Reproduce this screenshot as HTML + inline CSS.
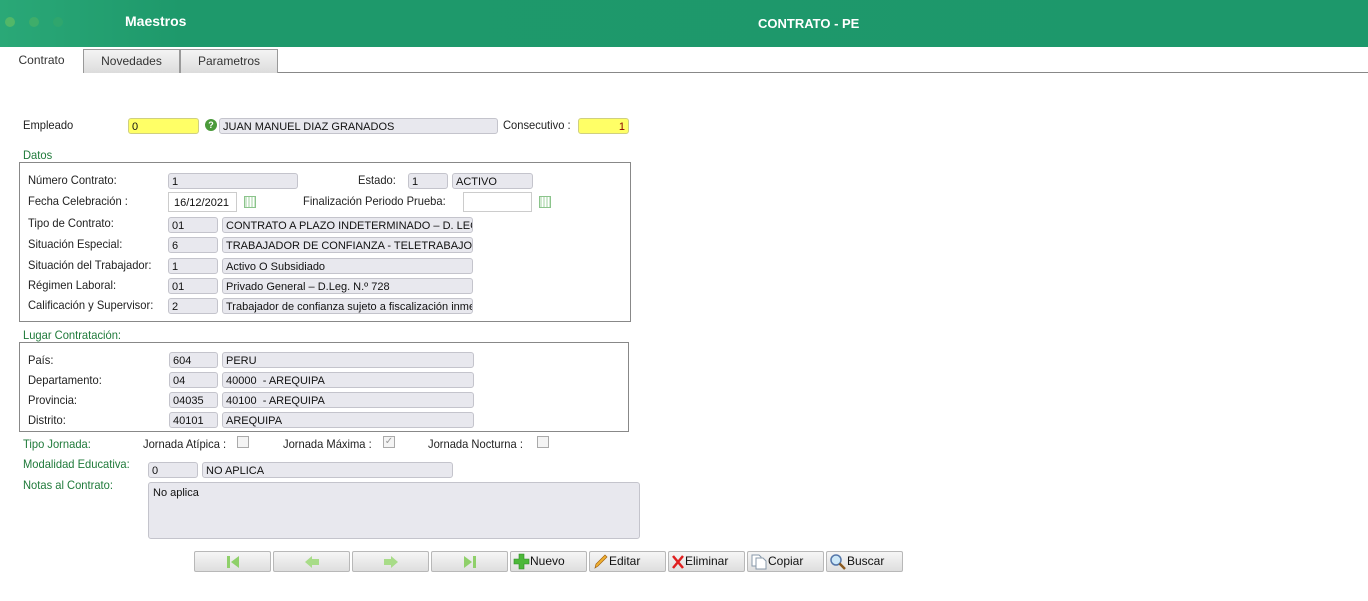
<!DOCTYPE html>
<html><head><meta charset="utf-8"><style>
*{margin:0;padding:0;box-sizing:border-box}
body{width:1368px;height:601px;background:#fff;position:relative;overflow:hidden;font-family:"Liberation Sans",Arial,sans-serif;color:#222}
.a{position:absolute}
.hdr{left:0;top:0;width:1368px;height:47px;background:linear-gradient(90deg,#2aa877 0,#1e996b 180px,#1d986b 100%)}
.dot{width:10px;height:10px;border-radius:50%;background:#52b768;top:17px}
.l{position:absolute;font-size:12px;line-height:14px;color:#222;white-space:nowrap;transform:scaleX(.93);transform-origin:0 0}
.g{color:#1f7a3a}
.f{position:absolute;height:16px;border:1px solid #c4c4cc;border-radius:3px;background:#e8e8ee;font-size:11px;line-height:16px;padding-left:3px;white-space:nowrap;overflow:hidden;color:#111}
.y{background:#ffff66;border-color:#d0d080;color:#800}
.w{background:#fff;border-radius:0;border-color:#ccc}
.box{position:absolute;border:1px solid #888}
.tab{position:absolute;top:49px;height:24px;font-size:12px;line-height:22px;text-align:center;color:#333;background:linear-gradient(#f4f4f4,#dcdcdc);border:1px solid #999;border-bottom:none}
.cal{position:absolute;width:12px;height:12px;border:1px solid #8bc48b;background:repeating-linear-gradient(90deg,#cfe8cf 0 2px,#fff 2px 3px)}
.cb{position:absolute;width:12px;height:12px;border:1px solid #aaa;background:#f4f4f4}
.b{position:absolute;top:551px;width:77px;height:21px;border:1px solid #b8b8b8;border-radius:2px;background:linear-gradient(#f6f6f6,#dedede);font-size:12px;line-height:19px;color:#111;display:flex;align-items:center;justify-content:center}
.b.t{justify-content:flex-start;padding-left:2px}
</style></head><body>
<div class="a hdr"></div>
<div class="a dot" style="left:5px"></div>
<div class="a dot" style="left:29px;background:#3fad6a"></div>
<div class="a dot" style="left:53px;background:#2fa66d"></div>
<div class="a" style="left:125px;top:13px;color:#fff;font-weight:bold;font-size:14px">Maestros</div>
<div class="a" style="left:758px;top:16px;color:#fff;font-weight:bold;font-size:13px">CONTRATO - PE</div>
<div class="a" style="left:0;top:72px;width:1368px;height:1px;background:#888"></div>
<div class="a" style="left:0;top:49px;width:83px;height:24px;background:#fff;font-size:12px;line-height:22px;text-align:center;color:#333">Contrato</div>
<div class="tab" style="left:83px;width:97px">Novedades</div>
<div class="tab" style="left:180px;width:98px">Parametros</div>

<div class="l" style="left:23px;top:118px">Empleado</div>
<div class="f y" style="left:128px;top:118px;width:71px;color:#111">0</div>
<div class="a" style="left:205px;top:119px;width:12px;height:12px;border-radius:50%;background:#4a9a3a;color:#fff;font-size:9px;font-weight:bold;text-align:center;line-height:12px">?</div>
<div class="f" style="left:219px;top:118px;width:279px">JUAN MANUEL DIAZ GRANADOS</div>
<div class="l" style="left:503px;top:118px">Consecutivo :</div>
<div class="f y" style="left:578px;top:118px;width:51px;text-align:right;padding-right:3px">1</div>

<div class="l g" style="left:23px;top:148px">Datos</div>
<div class="box" style="left:19px;top:162px;width:612px;height:160px"></div>
<div class="l" style="left:28px;top:173px">Número Contrato:</div>
<div class="f" style="left:168px;top:173px;width:130px">1</div>
<div class="l" style="left:358px;top:173px">Estado:</div>
<div class="f" style="left:408px;top:173px;width:40px">1</div>
<div class="f" style="left:452px;top:173px;width:81px">ACTIVO</div>
<div class="l" style="left:28px;top:194px">Fecha Celebración :</div>
<div class="f w" style="left:168px;top:192px;width:69px;height:20px;line-height:20px;padding-left:5px">16/12/2021</div>
<div class="cal" style="left:244px;top:196px"></div>
<div class="l" style="left:303px;top:194px">Finalización Periodo Prueba:</div>
<div class="f w" style="left:463px;top:192px;width:69px;height:20px"></div>
<div class="cal" style="left:539px;top:196px"></div>
<div class="l" style="left:28px;top:216px">Tipo de Contrato:</div>
<div class="f" style="left:168px;top:217px;width:50px">01</div>
<div class="f" style="left:222px;top:217px;width:251px">CONTRATO A PLAZO INDETERMINADO – D. LEG</div>
<div class="l" style="left:28px;top:237px">Situación Especial:</div>
<div class="f" style="left:168px;top:237px;width:50px">6</div>
<div class="f" style="left:222px;top:237px;width:251px">TRABAJADOR DE CONFIANZA - TELETRABAJO (</div>
<div class="l" style="left:28px;top:258px">Situación del Trabajador:</div>
<div class="f" style="left:168px;top:258px;width:50px">1</div>
<div class="f" style="left:222px;top:258px;width:251px">Activo O Subsidiado</div>
<div class="l" style="left:28px;top:278px">Régimen Laboral:</div>
<div class="f" style="left:168px;top:278px;width:50px">01</div>
<div class="f" style="left:222px;top:278px;width:251px">Privado General – D.Leg. N.º 728</div>
<div class="l" style="left:28px;top:298px">Calificación y Supervisor:</div>
<div class="f" style="left:168px;top:298px;width:50px">2</div>
<div class="f" style="left:222px;top:298px;width:251px">Trabajador de confianza sujeto a fiscalización inmed</div>

<div class="l g" style="left:23px;top:328px">Lugar Contratación:</div>
<div class="box" style="left:19px;top:342px;width:610px;height:90px"></div>
<div class="l" style="left:28px;top:353px">País:</div>
<div class="f" style="left:169px;top:352px;width:49px">604</div>
<div class="f" style="left:222px;top:352px;width:252px">PERU</div>
<div class="l" style="left:28px;top:373px">Departamento:</div>
<div class="f" style="left:169px;top:372px;width:49px">04</div>
<div class="f" style="left:222px;top:372px;width:252px">40000 &nbsp;- AREQUIPA</div>
<div class="l" style="left:28px;top:393px">Provincia:</div>
<div class="f" style="left:169px;top:392px;width:49px">04035</div>
<div class="f" style="left:222px;top:392px;width:252px">40100 &nbsp;- AREQUIPA</div>
<div class="l" style="left:28px;top:413px">Distrito:</div>
<div class="f" style="left:169px;top:412px;width:49px">40101</div>
<div class="f" style="left:222px;top:412px;width:252px">AREQUIPA</div>

<div class="l g" style="left:23px;top:437px">Tipo Jornada:</div>
<div class="l" style="left:143px;top:437px">Jornada Atípica :</div>
<div class="cb" style="left:237px;top:436px"></div>
<div class="l" style="left:283px;top:437px">Jornada Máxima :</div>
<div class="cb" style="left:383px;top:436px;font-size:10px;line-height:10px;color:#999;text-align:center">✓</div>
<div class="l" style="left:428px;top:437px">Jornada Nocturna :</div>
<div class="cb" style="left:537px;top:436px"></div>
<div class="l g" style="left:23px;top:457px">Modalidad Educativa:</div>
<div class="f" style="left:148px;top:462px;width:50px">0</div>
<div class="f" style="left:202px;top:462px;width:251px">NO APLICA</div>
<div class="l g" style="left:23px;top:478px">Notas al Contrato:</div>
<div class="f" style="left:148px;top:482px;width:492px;height:57px;padding:3px 4px;line-height:14px">No aplica</div>

<div class="b" style="left:194px"><svg width="14" height="14"><rect x="1" y="1" width="3" height="12" fill="#8fd06a"/><path d="M13 1 L5 7 L13 13Z" fill="#8fd06a"/></svg></div>
<div class="b" style="left:273px"><svg width="16" height="14"><path d="M1 7 L8 1 V4 H15 V10 H8 V13Z" fill="#a8dc88"/></svg></div>
<div class="b" style="left:352px"><svg width="16" height="14"><path d="M15 7 L8 1 V4 H1 V10 H8 V13Z" fill="#a8dc88"/></svg></div>
<div class="b" style="left:431px"><svg width="14" height="14"><rect x="10" y="1" width="3" height="12" fill="#8fd06a"/><path d="M1 1 L9 7 L1 13Z" fill="#8fd06a"/></svg></div>
<div class="b t" style="left:510px"><svg width="17" height="17"><path d="M6 1h5v5h5v5h-5v5h-5v-5h-5v-5h5z" fill="#4cb83a" stroke="#2e8a24" stroke-width=".6"/></svg>Nuevo</div>
<div class="b t" style="left:589px"><svg width="17" height="17"><path d="M3 15 L4 11 L13 2 L15 4 L6 13Z" fill="#f0b030" stroke="#a06010" stroke-width=".7"/></svg>Editar</div>
<div class="b t" style="left:668px"><svg width="14" height="16"><path d="M2 2 L12 14 M12 2 L2 14" stroke="#e02020" stroke-width="2.5"/></svg>Eliminar</div>
<div class="b t" style="left:747px"><svg width="18" height="17"><path d="M2 2h7l2 2v9H2z" fill="#fff" stroke="#8899aa"/><path d="M6 5h7l3 3v8H6z" fill="#fff" stroke="#8899aa"/></svg>Copiar</div>
<div class="b t" style="left:826px"><svg width="18" height="17"><circle cx="7" cy="7" r="5" fill="#cde8f8" stroke="#5577aa" stroke-width="1.5"/><path d="M10.5 10.5 L16 16" stroke="#8a5a20" stroke-width="2.5"/></svg>Buscar</div>
</body></html>
